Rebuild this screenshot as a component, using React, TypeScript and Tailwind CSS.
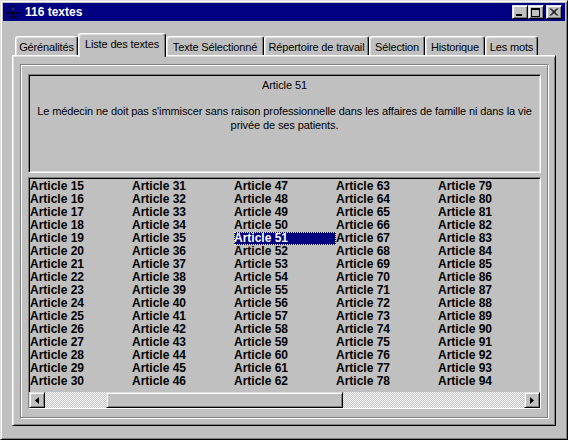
import React from "react";

const raised =
  "border border-t-[#dfdfdf] border-l-[#dfdfdf] border-r-black border-b-black shadow-[inset_1px_1px_#fff,inset_-1px_-1px_#808080]";
const sunken =
  "border border-t-[#808080] border-l-[#808080] border-r-white border-b-white shadow-[inset_1px_1px_#000,inset_-1px_-1px_#dfdfdf]";
const checker =
  "bg-[conic-gradient(#fff_25%,#c0c0c0_0_50%,#fff_0_75%,#c0c0c0_0)] bg-[length:2px_2px]";

const tabs = [
  { label: "Gérénalités", w: "w-[63px]" },
  { label: "Liste des textes", w: "w-[88px]", active: true },
  { label: "Texte Sélectionné", w: "w-[98px]" },
  { label: "Répertoire de travail", w: "w-[105px]" },
  { label: "Sélection", w: "w-[56px]" },
  { label: "Historique", w: "w-[60px]" },
  { label: "Les mots", w: "w-[53px]" },
];

// 5 visible columns, 16 rows each, starting at Article 15
const columns = [0, 1, 2, 3, 4].map((c) =>
  Array.from({ length: 16 }, (_, r) => 15 + c * 16 + r)
);

const TitleIcon = () => (
  <svg width="16" height="16" viewBox="0 0 16 16">
    <line x1="8" y1="1" x2="8" y2="15" stroke="#000030" strokeWidth="2" />
    <line x1="1" y1="9" x2="15" y2="9" stroke="#000030" strokeWidth="2" />
    <circle cx="8" cy="5" r="2.2" fill="#2020a0" stroke="#000030" />
    <line x1="4" y1="13" x2="12" y2="13" stroke="#000030" strokeWidth="1.5" />
  </svg>
);

const TitleButton = ({ kind, className = "" }: { kind: "min" | "max" | "close"; className?: string }) => (
  <div className={`w-[16px] h-[14px] bg-[#c0c0c0] flex items-center justify-center ${raised} ${className}`}>
    <svg width="10" height="9" viewBox="0 0 10 9">
      {kind === "min" && <rect x="1" y="6" width="6" height="2" fill="#000" />}
      {kind === "max" && (
        <>
          <rect x="0.5" y="0.5" width="8" height="8" fill="none" stroke="#000" />
          <rect x="0" y="0" width="9" height="2" fill="#000" />
        </>
      )}
      {kind === "close" && (
        <path d="M1 0.5 L8 7.5 M2 0.5 L9 7.5 M8 0.5 L1 7.5 M9 0.5 L2 7.5" stroke="#000" strokeWidth="1" />
      )}
    </svg>
  </div>
);

const Arrow = ({ dir }: { dir: "left" | "right" }) => (
  <div className={`w-[16px] h-[16px] bg-[#c0c0c0] flex items-center justify-center shrink-0 ${raised}`}>
    <svg width="4" height="7" viewBox="0 0 4 7">
      {dir === "left" ? <polygon points="4,0 4,7 0,3.5" fill="#000" /> : <polygon points="0,0 0,7 4,3.5" fill="#000" />}
    </svg>
  </div>
);

export default function App() {
  return (
    <div
      className={`w-[568px] h-[440px] bg-[#c0c0c0] p-[2px] ${raised}`}
      style={{ fontFamily: '"Liberation Sans", Arial, sans-serif' }}
    >
      {/* Title bar */}
      <div className="h-[18px] bg-[#000080] flex items-center pl-[2px] pr-[3px]">
        <TitleIcon />
        <span className="ml-[4px] text-white font-bold text-[12px] leading-none">116 textes</span>
        <div className="ml-auto flex items-center">
          <TitleButton kind="min" />
          <TitleButton kind="max" />
          <TitleButton kind="close" className="ml-[2px]" />
        </div>
      </div>

      <div className="px-[9px]">
        {/* Tabs */}
        <div className="mt-[12px] h-[22px] flex items-end pl-[3px] relative z-10">
          {tabs.map((t) => (
            <div
              key={t.label}
              className={`${t.w} ${
                t.active ? "h-[24px] -mb-[2px] bg-[#c0c0c0]" : "h-[19px]"
              } border-t border-l border-r border-t-white border-l-white border-r-black rounded-t-[3px] shadow-[inset_-1px_0_#808080,inset_1px_1px_#dfdfdf] flex justify-center pt-[3px] text-[11px] leading-[14px] tracking-[-0.15px] text-black whitespace-nowrap`}
            >
              {t.label}
            </div>
          ))}
        </div>

        {/* Tab panel */}
        <div className="h-[371px] border border-t-white border-l-white border-r-black border-b-black shadow-[inset_1px_1px_#dfdfdf,inset_-1px_-1px_#808080] pl-[7px] pt-[8px]">
          <div className="w-[528px] h-[354px] border border-[#808080] shadow-[inset_1px_1px_#fff,1px_1px_#fff] pl-[7px] pt-[9px]">
            {/* Memo */}
            <div className={`w-[513px] h-[99px] ${sunken} pt-[3px] text-center text-[11px] leading-[14px] tracking-[-0.1px] text-black`}>
              <div>Article 51</div>
              <div className="mt-[12px]">
                Le médecin ne doit pas s'immiscer sans raison professionnelle dans les affaires de famille ni dans la vie
                <br />
                privée de ses patients.
              </div>
            </div>

            {/* List */}
            <div className={`mt-[4px] w-[513px] h-[232px] ${sunken} flex flex-col`}>
              <div className="flex-1 pt-[2px] pl-[1px] overflow-hidden flex">
                {columns.map((col, ci) => (
                  <div key={ci} className="w-[102px] shrink-0 flex flex-col">
                    {col.map((n) => (
                      <div
                        key={n}
                        className={`h-[13px] leading-[13px] text-[12px] font-bold whitespace-nowrap ${
                          n === 51
                            ? "bg-[#000080] text-white outline outline-1 outline-dotted outline-[#ffff80] -outline-offset-1"
                            : "text-black"
                        }`}
                      >
                        Article {n}
                      </div>
                    ))}
                  </div>
                ))}
              </div>
              {/* Horizontal scrollbar */}
              <div className="h-[16px] flex">
                <Arrow dir="left" />
                <div className={`w-[61px] ${checker}`} />
                <div className={`w-[237px] h-[16px] bg-[#c0c0c0] ${raised}`} />
                <div className={`flex-1 ${checker}`} />
                <Arrow dir="right" />
              </div>
            </div>
          </div>
        </div>
      </div>
    </div>
  );
}
